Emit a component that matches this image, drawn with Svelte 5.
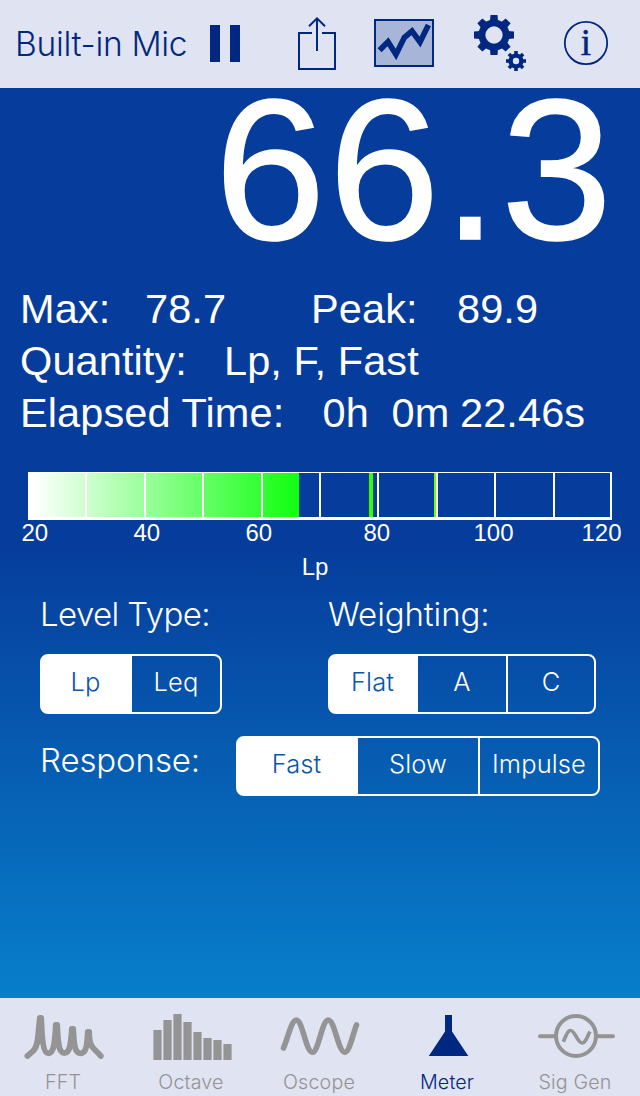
<script lang="ts">
	let level = 66.3;
	let max = 78.7;
	let peak = 89.9;

	let levelType = 'Lp';
	let weighting = 'Flat';
	let response = 'Fast';
	let activeTab = 'Meter';

	const levelTypes = ['Lp', 'Leq'];
	const weightings = ['Flat', 'A', 'C'];
	const responses = ['Fast', 'Slow', 'Impulse'];
	const tabs = ['FFT', 'Octave', 'Oscope', 'Meter', 'Sig Gen'];

	const scale = [20, 40, 60, 80, 100, 120];
	const ticks = [57, 116, 174, 233, 291, 349, 408, 466, 525, 582];
	const teeth = [0, 45, 90, 135, 180, 225, 270, 315];
	const octaveBars = [30, 40, 46, 38, 28, 22, 20, 16];
</script>

<div class="app">
	<header>
		<span class="source">Built-in Mic</span>
		<svg class="icon" width="30" height="88" viewBox="210 0 30 88">
			<path d="M210 25h10v37h-10zM230 25h10v37h-10z" fill="#002880" />
		</svg>
		<svg class="icon share" width="40" height="88" viewBox="297 0 40 88">
			<path
				d="M312 33H299V69H335V33H322M317 51V19M309 26.2L317 18.3L325 26.2"
				fill="none"
				stroke="#002880"
				stroke-width="2"
			/>
		</svg>
		<svg class="icon chart" width="60" height="88" viewBox="374 0 60 88">
			<rect x="375" y="20" width="58" height="46" fill="#a7b5d8" stroke="#002880" stroke-width="2" />
			<path
				d="M379.6 50.3L388 41.7L396 54.5L404.3 37.6L412 31L420 42L428.4 25"
				fill="none"
				stroke="#002880"
				stroke-width="5.6"
			/>
		</svg>
		<svg class="icon gears" width="52" height="88" viewBox="474 0 52 88">
			<g transform="translate(494 35)" fill="#002880">
				<circle r="12.1" fill="none" stroke="#002880" stroke-width="6.9" />
				{#each teeth as angle}
					<path d="M-4 -14L-3.5 -20H3.5L4 -14Z" transform="rotate({angle})" />
				{/each}
			</g>
			<g transform="translate(516 61)" fill="#002880">
				<circle r="5.4" fill="none" stroke="#002880" stroke-width="4.4" />
				{#each teeth as angle}
					<path d="M-1.8 -6.5V-10H1.8V-6.5Z" transform="rotate({angle})" />
				{/each}
			</g>
		</svg>
		<svg class="icon info-icon" width="46" height="88" viewBox="563 0 46 88">
			<circle cx="586" cy="43" r="21.2" fill="none" stroke="#002880" stroke-width="1.8" />
			<text x="586" y="54.8" text-anchor="middle">i</text>
		</svg>
	</header>

	<main>
		<div class="level">{level}</div>

		<div class="readout">
			<div class="row peaks"><span>Max:</span><span>{max}</span><span>Peak:</span><span>{peak}</span></div>
			<div class="row quantity"><span>Quantity:</span><span>Lp, F, Fast</span></div>
			<div class="row elapsed"><span>Elapsed Time:</span><span>0h</span><span>0m</span><span>22.46s</span></div>
		</div>

		<svg class="gauge" width="584" height="48" viewBox="0 0 584 48" shape-rendering="crispEdges">
			<defs>
				<linearGradient id="fill" x1="0" x2="1">
					<stop offset="0.02" stop-color="#fff" />
					<stop offset="1" stop-color="#10ff10" />
				</linearGradient>
			</defs>
			<rect width="271" height="46" fill="url(#fill)" />
			<rect x="341" width="4" height="46" fill="#30ff00" />
			<rect x="406" width="2" height="46" fill="#70ff00" />
			{#each ticks as x}
				<rect {x} width="2" height="46" fill="#fff" />
			{/each}
			<path d="M0 0H584V1H0ZM0 45H584V48H0Z" fill="#fff" />
		</svg>
		<div class="scale">
			{#each scale as value}
				<span>{value}</span>
			{/each}
		</div>
		<div class="unit">Lp</div>

		<div class="settings">
			<div class="setting">
				<div class="label tight">Level Type:</div>
				<div class="segments level-type">
					{#each levelTypes as item}
						<button class:selected={levelType == item} on:click={() => (levelType = item)}>{item}</button>
					{/each}
				</div>
			</div>
			<div class="setting">
				<div class="label">Weighting:</div>
				<div class="segments weighting">
					{#each weightings as item}
						<button class:selected={weighting == item} on:click={() => (weighting = item)}>{item}</button>
					{/each}
				</div>
			</div>
		</div>
		<div class="response-row">
			<div class="label">Response:</div>
			<div class="segments response">
				{#each responses as item}
					<button class:selected={response == item} on:click={() => (response = item)}>{item}</button>
				{/each}
			</div>
		</div>
	</main>

	<nav>
		{#each tabs as tab, i}
			<button class="tab" class:active={activeTab == tab} on:click={() => (activeTab = tab)}>
				<svg width="128" height="70" viewBox="{i * 128} 998 128 70" fill="none" stroke-linecap="round" stroke-linejoin="round">
					{#if tab == 'FFT'}
						<path
							d="M27.4 1056L33.5 1050.6C38 1046 37.8 1038 38.6 1030L39.8 1018H41.2C41.8 1030 42 1053.3 48.3 1053.3C54.6 1053.3 55 1040 55.8 1025H57.2C57.9 1040 58 1053 64.3 1053C70.6 1053 71 1042 71.8 1029H73.2C73.9 1042 74 1053.3 80.3 1053.3C86.6 1053.3 87 1045 87.8 1032H89.2C89.5 1048 92 1046 100.8 1056"
							stroke="currentColor"
							stroke-width="5.8"
						/>
					{:else if tab == 'Octave'}
						{#each octaveBars as bar, n}
							<rect x={153.4 + n * 10} y={1060 - bar} width="8.2" height={bar} fill="currentColor" />
						{/each}
					{:else if tab == 'Oscope'}
						<path
							d="M283.5 1048C288 1038 291.5 1020 296.3 1020C302.5 1020 306 1052.3 312.3 1052.3C318.5 1052.3 322 1020 328.3 1020C334.5 1020 338.5 1052.3 344.8 1052.3C349.5 1052.3 352.5 1035 356.5 1025"
							stroke="currentColor"
							stroke-width="5.6"
						/>
					{:else if tab == 'Meter'}
						<path d="M445 1015H452V1031.5L468.3 1056H428.8L445 1031.5Z" fill="currentColor" />
					{:else}
						<g stroke="currentColor" stroke-width="4">
							<circle cx="576" cy="1036" r="20" />
							<path d="M540 1036.3H555M597 1036.3H613" />
							<path
								d="M563.3 1041.8C565.5 1037 567.5 1030.5 570.5 1030.5C575 1030.5 577.5 1043 582.3 1043C585.8 1043 587.5 1036 589.9 1031.5"
								stroke-width="3.7"
								stroke-linecap="butt"
							/>
						</g>
					{/if}
				</svg>
				<span>{tab}</span>
			</button>
		{/each}
	</nav>
</div>

<style>
	:global(body) {
		margin: 0;
		background: #e0e3f1;
	}

	.app {
		width: 640px;
		height: 1096px;
		display: flex;
		flex-direction: column;
		overflow: hidden;
		font-family: 'Liberation Sans', Arial, sans-serif;
	}

	header {
		display: flex;
		height: 88px;
		background: #e0e3f1;
		color: #002880;
	}

	.source {
		width: 195px;
		padding-left: 15px;
		font: 300 33.5px/88px Inter, sans-serif;
		letter-spacing: -0.3px;
		white-space: nowrap;
	}

	.icon {
		flex: none;
	}

	.share {
		margin-left: 57px;
	}

	.chart {
		margin-left: 37px;
	}

	.gears {
		margin-left: 40px;
	}

	.info-icon {
		margin-left: 37px;
	}

	.info-icon text {
		font: 37px 'Liberation Serif', serif;
		fill: #002880;
		stroke: #002880;
		stroke-width: 0.5px;
	}

	main {
		height: 910px;
		color: white;
		background: linear-gradient(#063c9b 0, #063c9b 452px, #077fca 100%);
	}

	.level {
		height: 195px;
		padding-right: 25px;
		font-size: 200px;
		line-height: 163px;
		letter-spacing: 2.8px;
		text-align: right;
		-webkit-text-stroke: 1.5px white;
	}

	.readout {
		height: 189px;
		padding-left: 20px;
		font-size: 41.5px;
		line-height: 52px;
		letter-spacing: 0.1px;
		white-space: nowrap;
	}

	.row {
		display: grid;
	}

	.peaks {
		grid-template-columns: 125px 166px 146px auto;
	}

	.quantity {
		grid-template-columns: 204px auto;
	}

	.elapsed {
		grid-template-columns: 302.5px 69px 68.5px auto;
	}

	.gauge {
		display: block;
		margin-left: 28px;
	}

	.scale {
		display: grid;
		grid-template-columns: 112px 112px 118px 110px 108px auto;
		padding-left: 21.5px;
		font-size: 24px;
		line-height: 26px;
	}

	.unit {
		width: 630px;
		padding-top: 8px;
		font-size: 24px;
		line-height: 26px;
		text-align: center;
	}

	.settings {
		display: grid;
		grid-template-columns: 288px auto;
		padding: 14px 0 0 40px;
	}

	.label {
		font: 300 33px/40px Inter, sans-serif;
		letter-spacing: -0.1px;
		white-space: nowrap;
	}

	.label.tight {
		letter-spacing: -0.6px;
	}

	.setting .label {
		height: 60px;
	}

	.segments {
		display: grid;
		box-sizing: border-box;
		height: 60px;
		border: 2px solid white;
		border-radius: 8px;
	}

	.level-type {
		width: 182px;
		grid-template-columns: 90px 88px;
	}

	.weighting {
		width: 268px;
		grid-template-columns: 88px 88px 88px;
	}

	.response {
		width: 364px;
		grid-template-columns: 120px 120px 120px;
	}

	button {
		margin: 0;
		padding: 0;
		border: 0;
		background: none;
		color: inherit;
		font-family: inherit;
	}

	.segments button {
		padding-bottom: 4px;
		font: 300 25.5px/30px Inter, sans-serif;
		letter-spacing: 0.1px;
	}

	.segments button + button + button {
		border-left: 2px solid white;
	}

	.segments .selected {
		background: white;
		color: #0857aa;
	}

	.segments .selected:first-child {
		margin: -1px 0 -1px -1px;
		padding-right: 2px;
		border-radius: 7px 0 0 7px;
	}

	.response-row {
		display: flex;
		padding: 22px 0 0 40px;
	}

	.response-row .label {
		width: 196px;
		padding-top: 4px;
	}

	nav {
		display: grid;
		grid-template-columns: repeat(5, 128px);
		height: 98px;
		background: #e0e3f1;
	}

	.tab {
		display: flex;
		flex-direction: column;
		align-items: center;
		color: #949494;
		font: 300 19.7px/28px Inter, sans-serif;
		letter-spacing: 0.15px;
	}

	.tab span {
		padding-right: 2px;
	}

	.tab.active {
		color: #002880;
	}
</style>
